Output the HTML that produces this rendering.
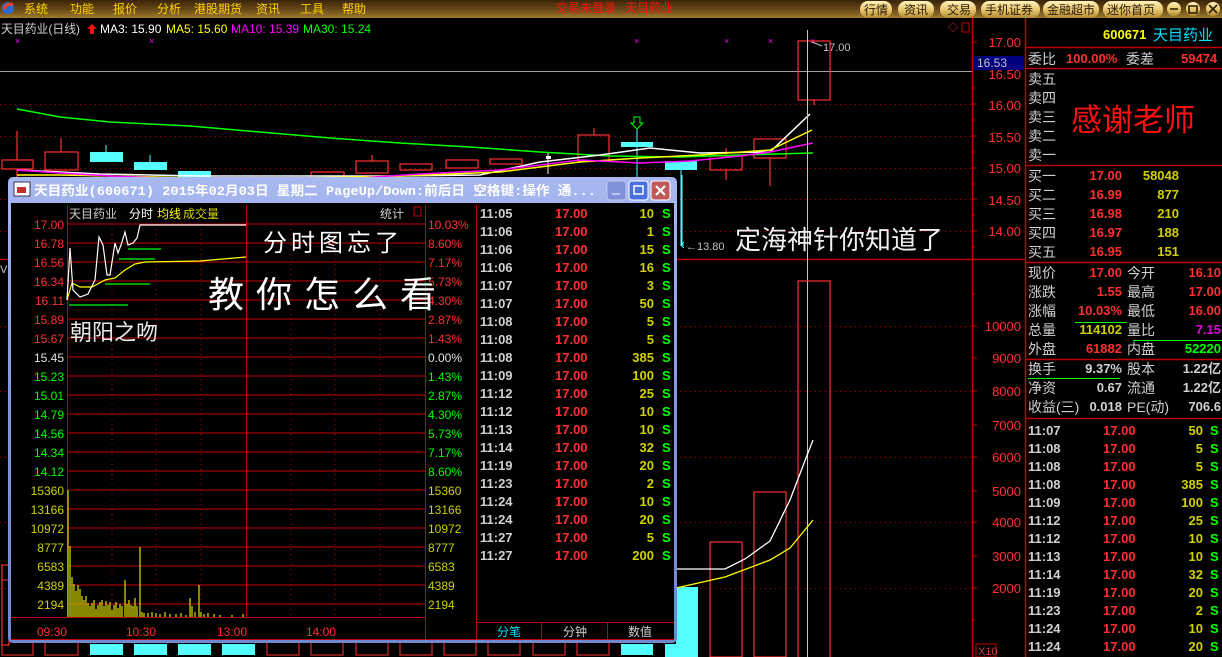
<!DOCTYPE html>
<html><head><meta charset="utf-8"><style>
html,body{margin:0;padding:0;background:#000;width:1222px;height:657px;overflow:hidden}
svg{display:block}
text{font-family:"Liberation Sans","Noto Sans CJK SC",sans-serif}
</style></head><body>
<svg width="1222" height="657" viewBox="0 0 1222 657" xmlns="http://www.w3.org/2000/svg">
<defs>
<linearGradient id="tb" x1="0" y1="0" x2="0" y2="1"><stop offset="0" stop-color="#3a2408"/><stop offset="0.55" stop-color="#6a4a18"/><stop offset="1" stop-color="#a07a30"/></linearGradient>
<linearGradient id="btn" x1="0" y1="0" x2="0" y2="1"><stop offset="0" stop-color="#fff4c0"/><stop offset="0.5" stop-color="#e8c870"/><stop offset="1" stop-color="#b08a30"/></linearGradient>
<linearGradient id="xp" x1="0" y1="0" x2="0" y2="1"><stop offset="0" stop-color="#a8b8f0"/><stop offset="0.5" stop-color="#8296dc"/><stop offset="1" stop-color="#7088d0"/></linearGradient>
</defs>
<!-- top bar -->
<rect x="0" y="0" width="1222" height="18" fill="url(#tb)"/>
<circle cx="8" cy="8" r="6" fill="#2a6ad0"/><path d="M4 9 Q8 2 13 5" stroke="#f04020" stroke-width="3" fill="none"/>
<g fill="#ffd200" font-size="12"><text x="24" y="13">系统</text><text x="70" y="13">功能</text><text x="113" y="13">报价</text><text x="157" y="13">分析</text><text x="194" y="13">港股期货</text><text x="256" y="13">资讯</text><text x="300" y="13">工具</text><text x="342" y="13">帮助</text></g>
<text x="556" y="12" fill="#ff1010" font-size="12">交易未登录</text><text x="625" y="12" fill="#ff1010" font-size="12">天目药业</text>
<g font-size="12" fill="#2a1a00">
<rect x="860" y="1" width="32" height="17" rx="8" fill="url(#btn)"/><text x="864" y="14">行情</text>
<rect x="898" y="1" width="36" height="17" rx="8" fill="url(#btn)"/><text x="904" y="14">资讯</text>
<rect x="940" y="1" width="36" height="17" rx="8" fill="url(#btn)"/><text x="947" y="14">交易</text>
<rect x="981" y="1" width="59" height="17" rx="8" fill="url(#btn)"/><text x="985" y="14">手机证券</text>
<rect x="1043" y="1" width="56" height="17" rx="8" fill="url(#btn)"/><text x="1047" y="14">金融超市</text>
<rect x="1103" y="1" width="60" height="17" rx="8" fill="url(#btn)"/><text x="1107" y="14">迷你首页</text>
</g>
<g fill="url(#btn)"><circle cx="1174" cy="9" r="7"/><circle cx="1193" cy="9" r="7"/><circle cx="1213" cy="9" r="7"/></g>
<path d="M1170 9h8M1189 6h8v7h-8zM1209 5l8 8M1217 5l-8 8" stroke="#2a1a00" stroke-width="1.6" fill="none"/>

<!-- header -->
<g font-size="12"><text x="1" y="33" fill="#d0d0d0" textLength="79" lengthAdjust="spacingAndGlyphs">天目药业(日线)</text>
<path d="M92 24l5 5h-3v5h-4v-5h-3z" fill="#ff1010"/>
<text x="100" y="33" fill="#fff">MA3: 15.90</text><text x="166" y="33" fill="#ffff00">MA5: 15.60</text><text x="231" y="33" fill="#ff00ff">MA10: 15.39</text><text x="303" y="33" fill="#00ff00">MA30: 15.24</text></g>

<!-- main axes -->
<line x1="972.5" y1="18" x2="972.5" y2="657" stroke="#c00000" stroke-width="1.5"/>
<line x1="1025.5" y1="18" x2="1025.5" y2="657" stroke="#c00000" stroke-width="1.5"/>
<line x1="0" y1="259.5" x2="1025" y2="259.5" stroke="#c00000" stroke-width="1.5"/>
<line x1="0" y1="71.5" x2="972" y2="71.5" stroke="#a0a0a0"/>
<g stroke="#c00000" stroke-dasharray="1 4">
<line x1="0" y1="104.5" x2="972" y2="104.5"/><line x1="0" y1="136.5" x2="972" y2="136.5"/><line x1="0" y1="168.5" x2="972" y2="168.5"/><line x1="0" y1="199.5" x2="972" y2="199.5"/><line x1="0" y1="231.5" x2="972" y2="231.5"/>
<line x1="0" y1="326.5" x2="972" y2="326.5"/><line x1="0" y1="391.5" x2="972" y2="391.5"/><line x1="0" y1="457.5" x2="972" y2="457.5"/><line x1="0" y1="522.5" x2="972" y2="522.5"/><line x1="0" y1="588.5" x2="972" y2="588.5"/>
</g>
<g fill="#ff3030" font-size="13" text-anchor="end">
<text x="1021" y="47">17.00</text><text x="1021" y="79">16.50</text><text x="1021" y="110">16.00</text><text x="1021" y="142">15.50</text><text x="1021" y="173">15.00</text><text x="1021" y="205">14.50</text><text x="1021" y="236">14.00</text>
<text x="1021" y="331">10000</text><text x="1021" y="363">9000</text><text x="1021" y="396">8000</text><text x="1021" y="430">7000</text><text x="1021" y="462">6000</text><text x="1021" y="496">5000</text><text x="1021" y="527">4000</text><text x="1021" y="561">3000</text><text x="1021" y="593">2000</text></g>
<g stroke="#c00000"><path d="M972 42h5M972 58h3M972 88h3M972 104h5M972 120h3M972 136h5M972 152h3M972 168h5M972 184h3M972 199h5M972 215h3M972 231h5M972 247h3M972 294h3M972 326h5M972 358h5M972 391h5M972 425h5M972 457h5M972 491h5M972 522h5M972 556h5M972 588h5M972 620h3"/></g>
<rect x="974" y="56" width="50" height="14" fill="#000080"/><text x="977" y="67" fill="#c0c0c0" font-size="12">16.53</text>
<rect x="976" y="644" width="20" height="13" fill="none" stroke="#c00000"/><text x="978" y="655" fill="#d04040" font-size="11">X10</text>
<text x="948" y="31" fill="#ff3030" font-size="10">◇</text><rect x="962" y="23" width="7" height="9" fill="none" stroke="#c00000"/>

<!-- magenta x marks -->
<g fill="#ff00ff" font-size="9"><text x="15" y="44">×</text><text x="149" y="44">×</text><text x="634" y="44">×</text><text x="724" y="44">×</text><text x="768" y="44">×</text><text x="810" y="44">×</text></g>

<!-- candles background -->
<g fill="none" stroke="#ff3030" stroke-width="1.2">
<rect x="2" y="160" width="31" height="9"/><rect x="45" y="152" width="33" height="18"/><rect x="311" y="172" width="33" height="6"/><rect x="356" y="161" width="32" height="12"/><rect x="400" y="164" width="32" height="6"/><rect x="446" y="160" width="32" height="8"/><rect x="490" y="159" width="32" height="5"/><rect x="578" y="135" width="31" height="26"/>
<rect x="710" y="156" width="32" height="14"/><rect x="754" y="139" width="32" height="19"/><rect x="798" y="41" width="32" height="59"/>
<path d="M17 131v29M17 169v9M61 138v14M372 155v6M594 128v7M726 148v8M726 170v10M770 158v28M814 100v5"/>
</g>
<g fill="#55ffff"><rect x="90" y="152" width="33" height="10"/><rect x="134" y="162" width="33" height="8"/><rect x="178" y="171" width="33" height="6"/><rect x="621" y="142" width="32" height="5"/><rect x="665" y="161" width="32" height="9"/></g>
<path d="M106 145v7M150 155v7M637 128v14M637 147v30M681 170v76" stroke="#55ffff"/>
<path d="M634 117h6v6h3l-6 6-6-6h3z" fill="none" stroke="#00ff00"/>
<rect x="546" y="156" width="5" height="3" fill="#fff"/><path d="M548 152v22" stroke="#fff"/>
<!-- MAs -->
<polyline points="17,109 60,117 110,122 190,126 260,132 330,138 400,143 470,147 540,152 610,156 680,157 740,155 813,153" fill="none" stroke="#00ff00" stroke-width="1.5"/>
<polyline points="17,170 60,172 100,174 150,175 200,176 260,176 330,176 400,176 480,175 540,162 600,155 650,148 700,153 770,152 810,114" fill="none" stroke="#ffffff" stroke-width="1.5"/>
<polyline points="17,175 60,175 110,176 200,178 300,178 400,176 500,172 580,162 640,158 700,155 770,150 812,130" fill="none" stroke="#ffff00" stroke-width="1.5"/>
<polyline points="17,170 60,173 110,176 160,178 230,180 300,181 360,178 420,174 500,170 580,160 640,163 690,161 740,156 770,152 813,143" fill="none" stroke="#ff00ff" stroke-width="1.5"/>
<line x1="807.5" y1="30" x2="807.5" y2="657" stroke="#c8c8c8"/>
<path d="M812 42l10 4" stroke="#c0c0c0"/><text x="823" y="51" fill="#c0c0c0" font-size="11">17.00</text>
<path d="M682 175v70h2M684 242l-3 3 3 3" stroke="#55ffff" fill="none"/><text x="686" y="250" fill="#c0c0c0" font-size="11">←13.80</text>
<text x="735" y="249" fill="#f0f0f0" font-size="26">定海神针你知道了</text>
<text x="0" y="273" fill="#c0c0c0" font-size="11">V</text>

<!-- volume main -->
<g fill="none" stroke="#ff3030" stroke-width="1.2"><rect x="710" y="542" width="32" height="115"/><rect x="754" y="492" width="32" height="165"/><rect x="798" y="281" width="32" height="380"/><rect x="2" y="565" width="7" height="80"/></g>
<rect x="676" y="587" width="22" height="70" fill="#55ffff"/>
<polyline points="676,569 725,569 745,559 770,541 790,500 806,458 813,440" fill="none" stroke="#fff" stroke-width="1.3"/>
<polyline points="676,588 725,577 770,560 790,548 813,520" fill="none" stroke="#ffff00" stroke-width="1.3"/>
<!-- bottom row under popup -->
<g fill="#55ffff"><rect x="90" y="644" width="33" height="11"/><rect x="134" y="644" width="33" height="11"/><rect x="178" y="644" width="33" height="11"/><rect x="222" y="644" width="33" height="11"/><rect x="621" y="644" width="32" height="11"/><rect x="665" y="644" width="32" height="13"/></g>
<g fill="none" stroke="#ff3030"><rect x="2" y="580" width="31" height="75"/><rect x="45" y="640" width="33" height="15"/><rect x="267" y="640" width="32" height="15"/><rect x="311" y="640" width="32" height="15"/><rect x="356" y="640" width="32" height="15"/><rect x="400" y="640" width="32" height="15"/><rect x="444" y="640" width="32" height="15"/><rect x="488" y="640" width="32" height="15"/><rect x="533" y="640" width="32" height="15"/><rect x="577" y="640" width="32" height="15"/></g>

<!-- right panel -->
<g font-size="14">
<text x="1103" y="39" fill="#ffff00" font-weight="bold" font-size="13">600671</text><text x="1153" y="40" fill="#00e0ff" font-size="15">天目药业</text>
<line x1="1025" y1="47.5" x2="1222" y2="47.5" stroke="#c00000" stroke-width="1.5"/>
<text x="1028" y="64" fill="#d0d0d0">委比</text><text x="1066" y="63" fill="#ff3030" font-weight="bold" font-size="13">100.00%</text><text x="1126" y="64" fill="#d0d0d0">委差</text><text x="1181" y="63" fill="#ff3030" font-weight="bold" font-size="13">59474</text>
<line x1="1025" y1="68.5" x2="1222" y2="68.5" stroke="#c00000" stroke-width="1.5"/>
<g fill="#d0d0d0"><text x="1028" y="84">卖五</text><text x="1028" y="103">卖四</text><text x="1028" y="122">卖三</text><text x="1028" y="141">卖二</text><text x="1028" y="160">卖一</text></g>
<text x="1071" y="131" fill="#ff1010" font-size="31">感谢老师</text>
<line x1="1025" y1="165.5" x2="1222" y2="165.5" stroke="#c00000" stroke-width="1.5"/>
<g fill="#d0d0d0"><text x="1028" y="181">买一</text><text x="1028" y="200">买二</text><text x="1028" y="219">买三</text><text x="1028" y="238">买四</text><text x="1028" y="257">买五</text></g>
<g fill="#ff3030" font-size="13" font-weight="bold" text-anchor="end"><text x="1122" y="180">17.00</text><text x="1122" y="199">16.99</text><text x="1122" y="218">16.98</text><text x="1122" y="237">16.97</text><text x="1122" y="256">16.95</text></g>
<g fill="#d0d000" font-size="13" font-weight="bold" text-anchor="end"><text x="1179" y="180">58048</text><text x="1179" y="199">877</text><text x="1179" y="218">210</text><text x="1179" y="237">188</text><text x="1179" y="256">151</text></g>
<line x1="1025" y1="262.5" x2="1222" y2="262.5" stroke="#c00000" stroke-width="1.5"/>
<g fill="#d0d0d0"><text x="1028" y="278">现价</text><text x="1028" y="297">涨跌</text><text x="1028" y="316">涨幅</text><text x="1028" y="335">总量</text><text x="1028" y="354">外盘</text>
<text x="1127" y="278">今开</text><text x="1127" y="297">最高</text><text x="1127" y="316">最低</text><text x="1127" y="335">量比</text><text x="1127" y="354">内盘</text></g>
<g font-size="13" font-weight="bold" text-anchor="end"><text x="1122" y="277" fill="#ff3030">17.00</text><text x="1122" y="296" fill="#ff3030">1.55</text><text x="1122" y="315" fill="#ff3030">10.03%</text><text x="1122" y="334" fill="#d0d000">114102</text><text x="1122" y="353" fill="#ff3030">61882</text>
<text x="1221" y="277" fill="#ff3030">16.10</text><text x="1221" y="296" fill="#ff3030">17.00</text><text x="1221" y="315" fill="#ff3030">16.00</text><text x="1221" y="334" fill="#e000e0">7.15</text><text x="1221" y="353" fill="#00ff00">52220</text></g>
<path d="M1075 322.5h52M1133 340.5h89" stroke="#00ff00"/>
<line x1="1025" y1="359.5" x2="1222" y2="359.5" stroke="#c00000" stroke-width="1.5"/>
<g fill="#d0d0d0"><text x="1028" y="374">换手</text><text x="1028" y="393">净资</text><text x="1028" y="412">收益(三)</text><text x="1127" y="374">股本</text><text x="1127" y="393">流通</text><text x="1127" y="412">PE(动)</text></g>
<g fill="#d0d0d0" font-size="13" font-weight="bold" text-anchor="end"><text x="1122" y="373">9.37%</text><text x="1122" y="392">0.67</text><text x="1122" y="411">0.018</text><text x="1221" y="373">1.22亿</text><text x="1221" y="392">1.22亿</text><text x="1221" y="411">706.6</text></g>
<path d="M1028 378.5h92" stroke="#00ff00"/>
<line x1="1025" y1="418.5" x2="1222" y2="418.5" stroke="#c00000" stroke-width="1.5"/>
</g>
<g font-size="13" font-weight="bold">
<g fill="#d0d0d0"><text x="1028" y="435">11:07</text><text x="1028" y="453">11:08</text><text x="1028" y="471">11:08</text><text x="1028" y="489">11:08</text><text x="1028" y="507">11:09</text><text x="1028" y="525">11:12</text><text x="1028" y="543">11:12</text><text x="1028" y="561">11:13</text><text x="1028" y="579">11:14</text><text x="1028" y="597">11:19</text><text x="1028" y="615">11:23</text><text x="1028" y="633">11:24</text><text x="1028" y="651">11:24</text></g>
<g fill="#ff3030"><text x="1103" y="435">17.00</text><text x="1103" y="453">17.00</text><text x="1103" y="471">17.00</text><text x="1103" y="489">17.00</text><text x="1103" y="507">17.00</text><text x="1103" y="525">17.00</text><text x="1103" y="543">17.00</text><text x="1103" y="561">17.00</text><text x="1103" y="579">17.00</text><text x="1103" y="597">17.00</text><text x="1103" y="615">17.00</text><text x="1103" y="633">17.00</text><text x="1103" y="651">17.00</text></g>
<g fill="#d0d000" text-anchor="end"><text x="1203" y="435">50</text><text x="1203" y="453">5</text><text x="1203" y="471">5</text><text x="1203" y="489">385</text><text x="1203" y="507">100</text><text x="1203" y="525">25</text><text x="1203" y="543">10</text><text x="1203" y="561">10</text><text x="1203" y="579">32</text><text x="1203" y="597">20</text><text x="1203" y="615">2</text><text x="1203" y="633">10</text><text x="1203" y="651">20</text></g>
<g fill="#00ff00"><text x="1210" y="435">S</text><text x="1210" y="453">S</text><text x="1210" y="471">S</text><text x="1210" y="489">S</text><text x="1210" y="507">S</text><text x="1210" y="525">S</text><text x="1210" y="543">S</text><text x="1210" y="561">S</text><text x="1210" y="579">S</text><text x="1210" y="597">S</text><text x="1210" y="615">S</text><text x="1210" y="633">S</text><text x="1210" y="651">S</text></g>
</g>

<!-- popup window -->
<rect x="8" y="177" width="669" height="466" rx="5" fill="url(#xp)"/>
<rect x="11" y="203" width="663" height="437" fill="#000"/>
<rect x="14" y="182" width="16" height="14" fill="#fff" stroke="#335"/><rect x="17" y="187" width="9" height="6" fill="#c03030"/>
<text x="34" y="195" fill="#fff" font-size="13" font-weight="bold" textLength="562" lengthAdjust="spacingAndGlyphs" style="font-family:'Liberation Mono','Noto Sans CJK SC',monospace">天目药业(600671) 2015年02月03日 星期二 PageUp/Down:前后日 空格键:操作 通...</text>
<rect x="607" y="181" width="19" height="19" rx="3" fill="#7f90d8" stroke="#c0c8f0"/><rect x="612" y="193" width="8" height="2" fill="#c0c8f0"/>
<rect x="629" y="181" width="19" height="19" rx="3" fill="#4a70e0" stroke="#fff"/><rect x="634" y="186" width="9" height="8" fill="none" stroke="#fff" stroke-width="1.5"/>
<rect x="651" y="181" width="19" height="19" rx="3" fill="#c05a5a" stroke="#fff"/><path d="M656 186l9 9M665 186l-9 9" stroke="#fff" stroke-width="2"/>

<!-- popup chart grid -->
<g stroke="#c00000">
<path d="M67 224h358M67 243h358M67 262h358M67 281h358M67 300h358M67 319h358M67 338h358M67 357h358M67 376h358M67 395h358M67 414h358M67 433h358M67 452h358M67 471h358M67 490h358M67 509h358M67 528h358M67 547h358M67 566h358M67 585h358M67 604h358"/>
<path d="M67.5 205v412M246.5 205v412M425.5 205v435M476.5 205v435M11 617.5h414M476 622.5h198M541.5 622v18M607.5 622v18M11 639.5h663" />
</g>
<g stroke="#c00000" stroke-dasharray="1 4"><path d="M112 224v393M156 224v393M201 224v393M291 224v393M335 224v393M380 224v393"/></g>
<g font-size="12" text-anchor="end">
<g fill="#ff3030"><text x="64" y="229">17.00</text><text x="64" y="248">16.78</text><text x="64" y="267">16.56</text><text x="64" y="286">16.34</text><text x="64" y="305">16.11</text><text x="64" y="324">15.89</text><text x="64" y="343">15.67</text></g>
<text x="64" y="362" fill="#e0e0e0">15.45</text>
<g fill="#00ff00"><text x="64" y="381">15.23</text><text x="64" y="400">15.01</text><text x="64" y="419">14.79</text><text x="64" y="438">14.56</text><text x="64" y="457">14.34</text><text x="64" y="476">14.12</text></g>
<g fill="#d0d000"><text x="64" y="495">15360</text><text x="64" y="514">13166</text><text x="64" y="533">10972</text><text x="64" y="552">8777</text><text x="64" y="571">6583</text><text x="64" y="590">4389</text><text x="64" y="609">2194</text></g>
</g>
<g font-size="12">
<g fill="#ff3030"><text x="428" y="229">10.03%</text><text x="428" y="248">8.60%</text><text x="428" y="267">7.17%</text><text x="428" y="286">5.73%</text><text x="428" y="305">4.30%</text><text x="428" y="324">2.87%</text><text x="428" y="343">1.43%</text></g>
<text x="428" y="362" fill="#e0e0e0">0.00%</text>
<g fill="#00ff00"><text x="428" y="381">1.43%</text><text x="428" y="400">2.87%</text><text x="428" y="419">4.30%</text><text x="428" y="438">5.73%</text><text x="428" y="457">7.17%</text><text x="428" y="476">8.60%</text></g>
<g fill="#d0d000"><text x="428" y="495">15360</text><text x="428" y="514">13166</text><text x="428" y="533">10972</text><text x="428" y="552">8777</text><text x="428" y="571">6583</text><text x="428" y="590">4389</text><text x="428" y="609">2194</text></g>
<g fill="#ff3030"><text x="37" y="636">09:30</text><text x="126" y="636">10:30</text><text x="217" y="636">13:00</text><text x="306" y="636">14:00</text></g>
<text x="69" y="218" fill="#d0d0d0">天目药业</text><text x="129" y="218" fill="#fff">分时</text><text x="157" y="218" fill="#ffff00">均线</text><text x="183" y="218" fill="#d0d000">成交量</text><text x="380" y="218" fill="#d0d0d0">统计</text>
</g>
<rect x="414" y="207" width="7" height="9" fill="none" stroke="#c00000"/>
<!-- intraday lines -->
<path d="M69 305h59M105 284h45M119 259h36M128 249h33" stroke="#00ff00" stroke-width="1.2"/>
<polyline points="67,300 72,283 80,287 92,287 105,280 115,278 125,270 135,264 145,262 200,261 246,257" fill="none" stroke="#ffff00" stroke-width="1.2"/>
<polyline points="67,300 70,248 73,290 80,297 88,294 95,280 99,237 103,245 107,275 110,275 115,243 118,253 121,245 125,232 128,245 133,243 137,238 140,225 246,225" fill="none" stroke="#fff" stroke-width="1.2"/>
<!-- volume bars -->
<path stroke="#d0d000" stroke-width="1.3" d="M68 617V490M70 617V546M72 617V577M74 617V584M76 617V591M78 617V585M80 617V589M82 617V596M84 617V600M86 617V596M88 617V603M90 617V606M92 617V603M94 617V600M96 617V609M98 617V605M100 617V602M102 617V600M104 617V606M106 617V601M108 617V605M110 617V602M112 617V610M114 617V605M116 617V602M118 617V608M120 617V604M122 617V606M125 617V580M127 617V604M129 617V600M131 617V605M133 617V606M135 617V598M137 617V606M140 617V547M142 617V612M144 617V613M148 617V613M152 617V612M156 617V613M160 617V614M165 617V612M170 617V614M176 617V614M181 617V613M186 617V615M190 617V598M192 617V606M195 617V612M199 617V585M201 617V612M204 617V614M208 617V613M214 617V614M220 617V615M232 617V615M243 617V614"/>
<!-- overlay handwriting -->
<text x="263" y="251" fill="#fff" font-size="24" letter-spacing="4">分时图忘了</text>
<text x="208" y="307" fill="#fff" font-size="36" letter-spacing="12">教你怎么看</text>
<text x="70" y="340" fill="#e8e8e8" font-size="22">朝阳之吻</text>
<!-- ticks list -->
<g font-size="13" font-weight="bold">
<g fill="#d0d0d0">
<text x="480" y="218">11:05</text><text x="480" y="236">11:06</text><text x="480" y="254">11:06</text><text x="480" y="272">11:06</text><text x="480" y="290">11:07</text><text x="480" y="308">11:07</text><text x="480" y="326">11:08</text><text x="480" y="344">11:08</text><text x="480" y="362">11:08</text><text x="480" y="380">11:09</text><text x="480" y="398">11:12</text><text x="480" y="416">11:12</text><text x="480" y="434">11:13</text><text x="480" y="452">11:14</text><text x="480" y="470">11:19</text><text x="480" y="488">11:23</text><text x="480" y="506">11:24</text><text x="480" y="524">11:24</text><text x="480" y="542">11:27</text><text x="480" y="560">11:27</text></g>
<g fill="#ff3030">
<text x="555" y="218">17.00</text><text x="555" y="236">17.00</text><text x="555" y="254">17.00</text><text x="555" y="272">17.00</text><text x="555" y="290">17.00</text><text x="555" y="308">17.00</text><text x="555" y="326">17.00</text><text x="555" y="344">17.00</text><text x="555" y="362">17.00</text><text x="555" y="380">17.00</text><text x="555" y="398">17.00</text><text x="555" y="416">17.00</text><text x="555" y="434">17.00</text><text x="555" y="452">17.00</text><text x="555" y="470">17.00</text><text x="555" y="488">17.00</text><text x="555" y="506">17.00</text><text x="555" y="524">17.00</text><text x="555" y="542">17.00</text><text x="555" y="560">17.00</text></g>
<g fill="#d0d000" text-anchor="end">
<text x="654" y="218">10</text><text x="654" y="236">1</text><text x="654" y="254">15</text><text x="654" y="272">16</text><text x="654" y="290">3</text><text x="654" y="308">50</text><text x="654" y="326">5</text><text x="654" y="344">5</text><text x="654" y="362">385</text><text x="654" y="380">100</text><text x="654" y="398">25</text><text x="654" y="416">10</text><text x="654" y="434">10</text><text x="654" y="452">32</text><text x="654" y="470">20</text><text x="654" y="488">2</text><text x="654" y="506">10</text><text x="654" y="524">20</text><text x="654" y="542">5</text><text x="654" y="560">200</text></g>
<g fill="#00ff00">
<text x="662" y="218">S</text><text x="662" y="236">S</text><text x="662" y="254">S</text><text x="662" y="272">S</text><text x="662" y="290">S</text><text x="662" y="308">S</text><text x="662" y="326">S</text><text x="662" y="344">S</text><text x="662" y="362">S</text><text x="662" y="380">S</text><text x="662" y="398">S</text><text x="662" y="416">S</text><text x="662" y="434">S</text><text x="662" y="452">S</text><text x="662" y="470">S</text><text x="662" y="488">S</text><text x="662" y="506">S</text><text x="662" y="524">S</text><text x="662" y="542">S</text><text x="662" y="560">S</text></g>
</g>
<g font-size="12"><text x="497" y="636" fill="#00e0ff">分笔</text><text x="563" y="636" fill="#d0d0d0">分钟</text><text x="628" y="636" fill="#d0d0d0">数值</text></g>
</svg>
</body></html>
